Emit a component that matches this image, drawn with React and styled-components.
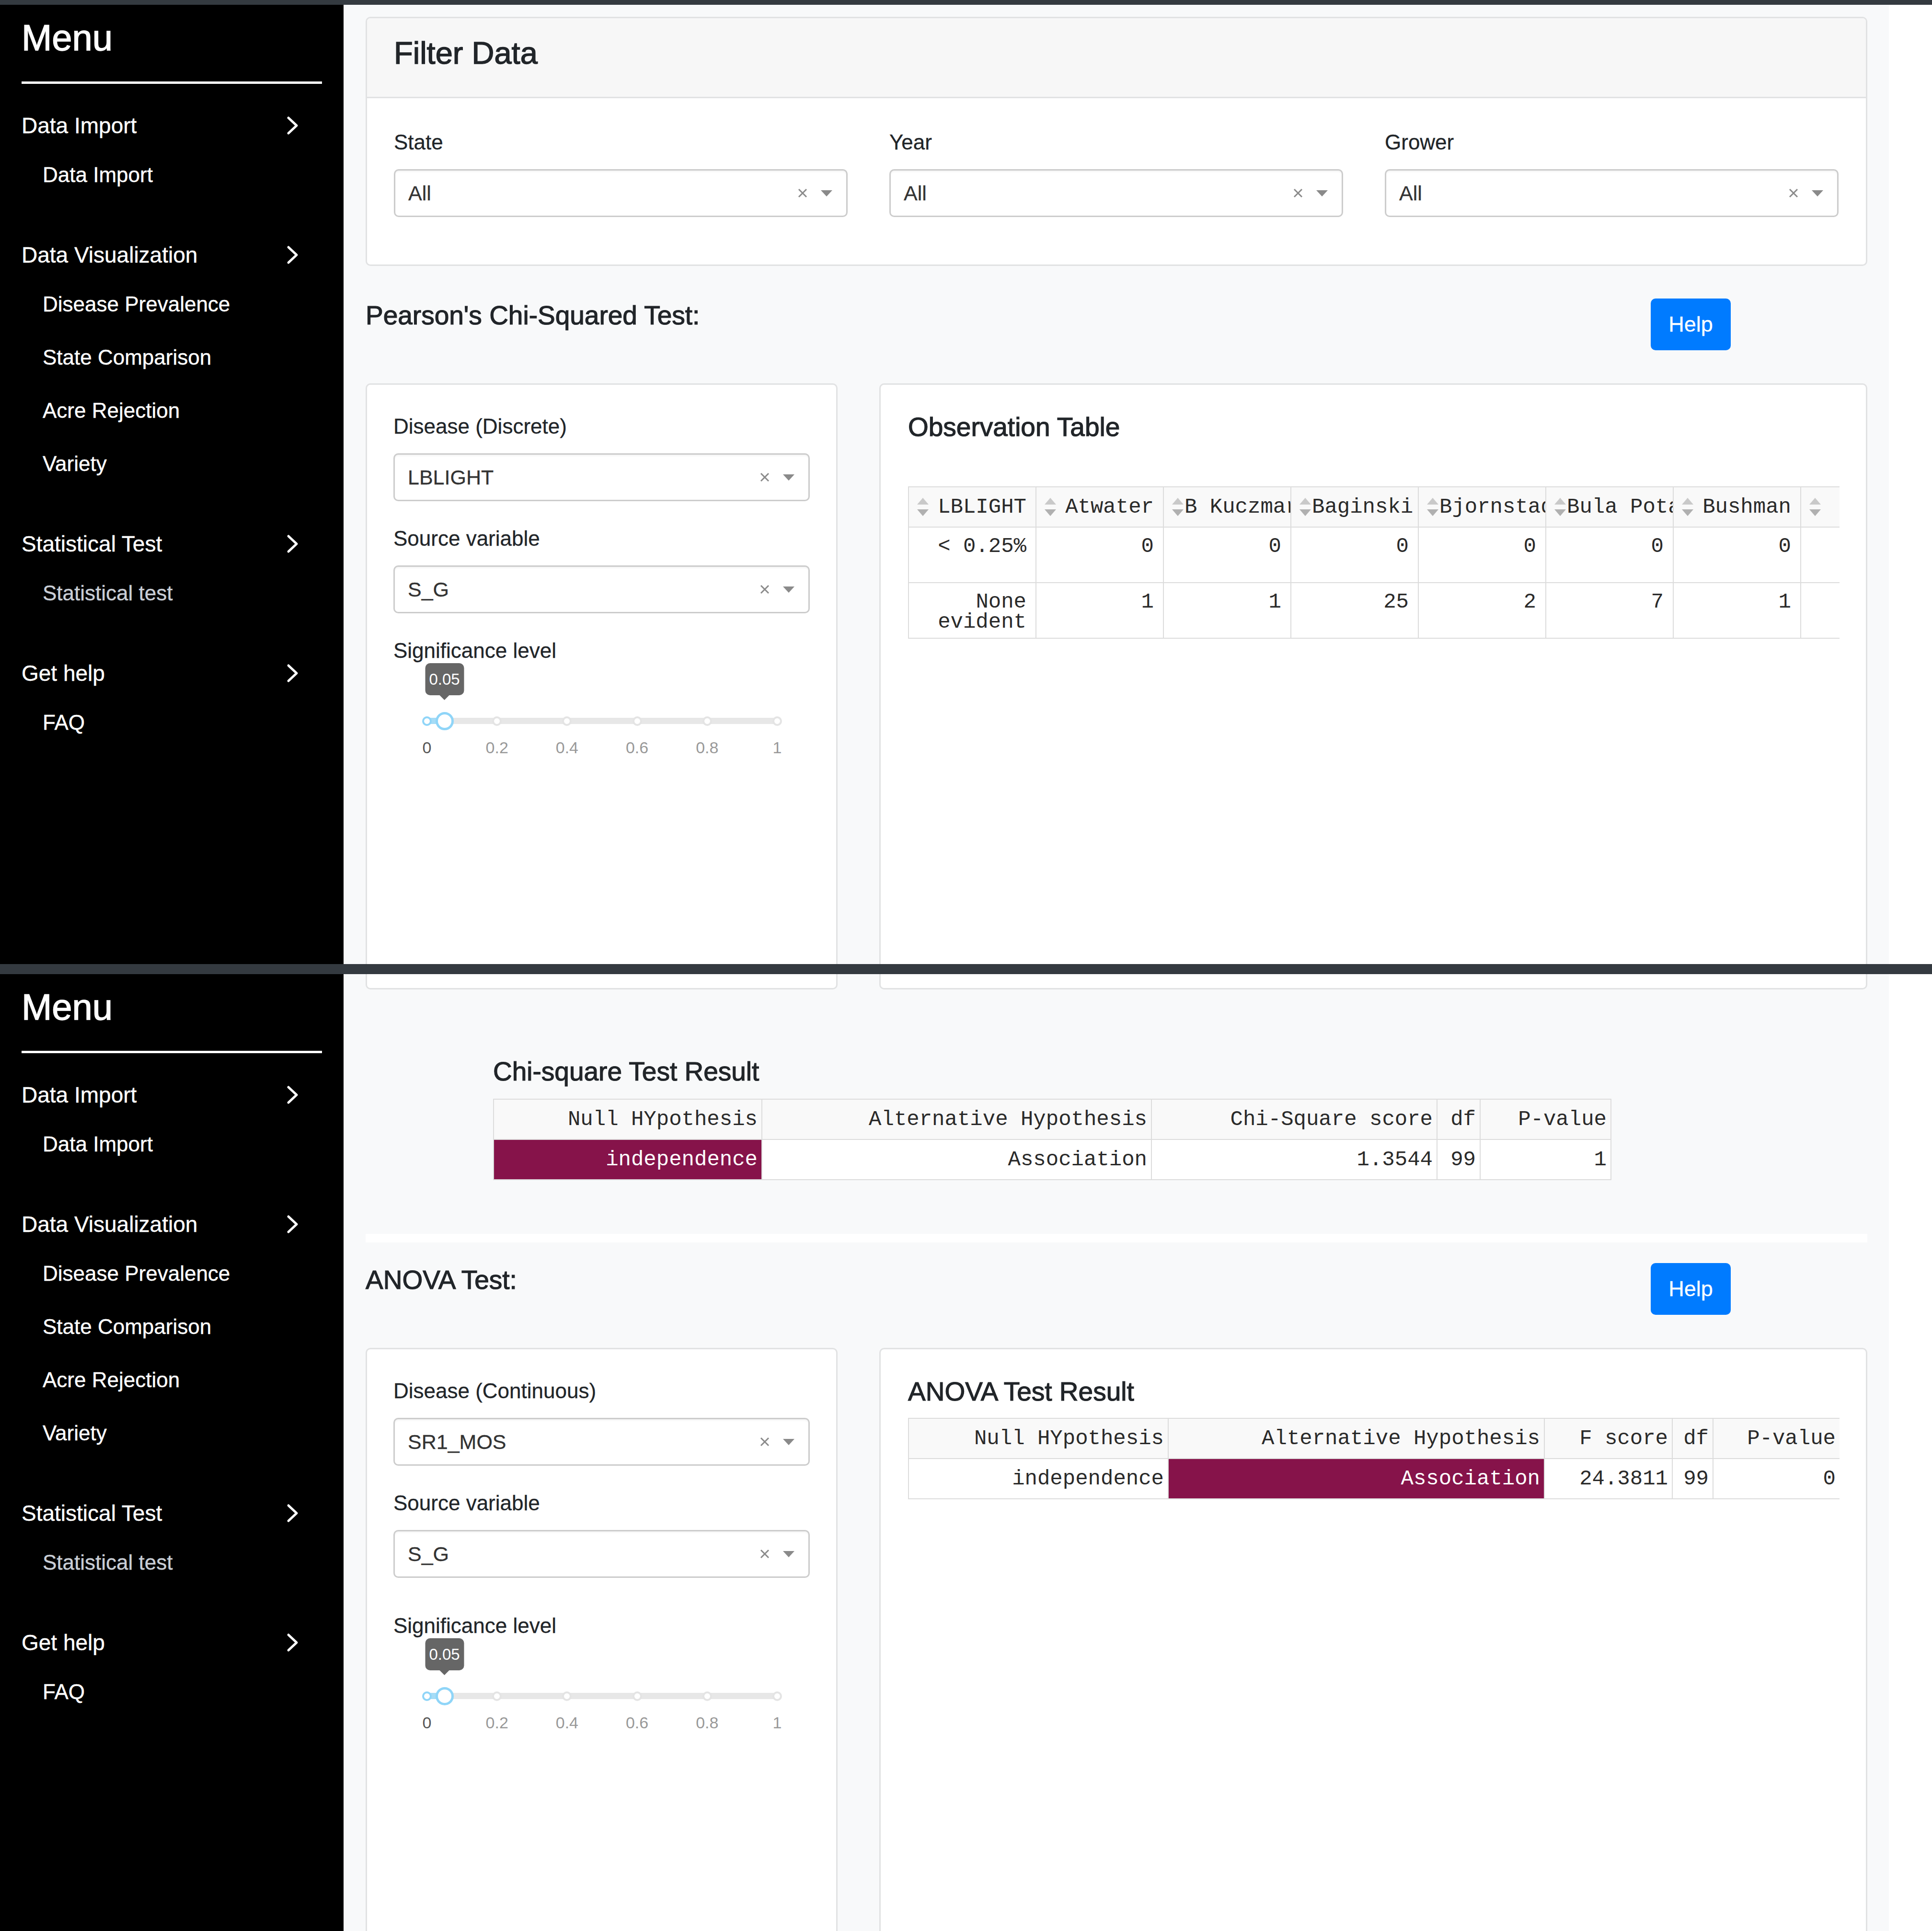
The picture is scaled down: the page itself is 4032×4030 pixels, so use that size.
import React from "react";
import styled, { createGlobalStyle } from "styled-components";

const SANS = `"Liberation Sans", Arial, Helvetica, sans-serif`;
const MONO = `"Liberation Mono", "Courier New", monospace`;

const GlobalStyle = createGlobalStyle`
  *, *::before, *::after { box-sizing: border-box; }
  html, body { margin: 0; padding: 0; background: #343a40; }
  body { font-family: ${SANS}; color: #212529; }
`;

const Page = styled.div`
  width: 4032px;
  height: 4030px;
  display: flex;
  flex-direction: column;
  background: #343a40;
  overflow: hidden;
`;

const Bar = styled.div`
  flex: none;
  height: ${(p) => p.$h}px;
  background: #343a40;
`;

const Screen = styled.div`
  flex: none;
  height: ${(p) => p.$h}px;
  display: flex;
  background: #ffffff;
  overflow: hidden;
`;

/* ---------- Sidebar ---------- */
const Sidebar = styled.nav`
  flex: none;
  width: 717px;
  background: #000;
  color: #fff;
  padding: 31px 45px 0 45px;
  font-family: ${SANS};
`;

const MenuTitle = styled.div`
  font-size: 76px;
  line-height: 76px;
  -webkit-text-stroke: 1.4px #fff;
`;

const MenuRule = styled.div`
  height: 5px;
  margin: 53px 0 52px;
  background: #fff;
`;

const GroupHeader = styled.div`
  height: 70px;
  display: flex;
  align-items: center;
  justify-content: space-between;
  padding-right: 47px;
  font-size: 46px;
  -webkit-text-stroke: 0.4px #fff;
`;

const SubList = styled.div`
  padding: 12px 0 77px 44px;
`;

const SubItem = styled.div`
  height: 111px;
  display: flex;
  align-items: center;
  font-size: 44px;
  color: ${(p) => (p.$active ? "#c9ced6" : "#ffffff")};
  -webkit-text-stroke: 0.4px ${(p) => (p.$active ? "#c9ced6" : "#ffffff")};
`;

const Chevron = () => (
  <svg width="28" height="40" viewBox="0 0 28 40" fill="none">
    <polyline
      points="5,4 22,20 5,36"
      stroke="#fff"
      strokeWidth="5"
      strokeLinecap="round"
      strokeLinejoin="round"
    />
  </svg>
);

const menu = [
  { title: "Data Import", items: ["Data Import"] },
  {
    title: "Data Visualization",
    items: ["Disease Prevalence", "State Comparison", "Acre Rejection", "Variety"],
  },
  { title: "Statistical Test", items: ["Statistical test"], active: "Statistical test" },
  { title: "Get help", items: ["FAQ"] },
];

const SideMenu = () => (
  <Sidebar>
    <MenuTitle>Menu</MenuTitle>
    <MenuRule />
    {menu.map((g) => (
      <div key={g.title}>
        <GroupHeader>
          <span>{g.title}</span>
          <Chevron />
        </GroupHeader>
        <SubList>
          {g.items.map((it) => (
            <SubItem key={it} $active={g.active === it}>
              {it}
            </SubItem>
          ))}
        </SubList>
      </div>
    ))}
  </Sidebar>
);

/* ---------- Main ---------- */
const Main = styled.main`
  flex: none;
  width: 3225px;
  background: #f8f9fa;
  padding: ${(p) => p.$top}px 45px 0 46px;
  display: flex;
  flex-direction: column;
`;

const Card = styled.section`
  flex: none;
  min-width: 0;
  background: #fff;
  border: 3px solid #e1e2e3;
  border-radius: 10px;
  height: ${(p) => (p.$h ? `${p.$h}px` : "auto")};
`;

const CardHeader = styled.div`
  background: #f7f7f7;
  border-bottom: 3px solid #e1e2e3;
  border-radius: 7px 7px 0 0;
  padding: 34px 56px 52px;
`;

const CardTitle = styled.h3`
  margin: 0;
  font-size: 65px;
  line-height: 78px;
  font-weight: 400;
  -webkit-text-stroke: 1.4px #212529;
`;

const FilterBody = styled.div`
  padding: 60px 57px 99px 56px;
  display: grid;
  grid-template-columns: repeat(3, minmax(0, 1fr));
  column-gap: 87px;
`;

const Field = styled.div`
  margin-top: ${(p) => p.$mt || 0}px;
`;

const Label = styled.label`
  display: block;
  font-size: 44px;
  line-height: 64px;
  margin-bottom: 24px;
  color: #212529;
  -webkit-text-stroke: 0.3px #212529;
`;

const SelectBox = styled.div`
  height: 100px;
  border: 3px solid #cccccc;
  border-radius: 10px;
  background: #fff;
  display: flex;
  align-items: center;
  padding: 0 29px 0 27px;
  font-size: 43px;
  color: #333;
  -webkit-text-stroke: 0.3px #333;
  box-shadow: inset 0 3px 3px rgba(0, 0, 0, 0.04);
`;

const SelectValue = styled.span`
  flex: 1;
`;

const SelectIcons = styled.span`
  display: flex;
  align-items: center;
  gap: 27px;
`;

const Select = ({ value }) => (
  <SelectBox>
    <SelectValue>{value}</SelectValue>
    <SelectIcons>
      <svg width="22" height="22" viewBox="0 0 22 22">
        <path d="M3 3 L19 19 M19 3 L3 19" stroke="#8a8a8a" strokeWidth="3" />
      </svg>
      <svg width="24" height="13" viewBox="0 0 24 13">
        <polygon points="0,0 24,0 12,13" fill="#8a8a8a" />
      </svg>
    </SelectIcons>
  </SelectBox>
);

const SectionHeader = styled.div`
  flex: none;
  display: flex;
  justify-content: space-between;
  align-items: flex-start;
  padding-right: 285px;
  margin-top: ${(p) => p.$mt}px;
`;

const SectionTitle = styled.h3`
  margin: 2px 0 0;
  font-size: 55px;
  line-height: 66px;
  font-weight: 400;
  -webkit-text-stroke: 1.2px #212529;
`;

const HelpButton = styled.button`
  width: 167px;
  height: 108px;
  padding: 0;
  border: none;
  border-radius: 10px;
  background: #007bff;
  color: #fff;
  font-family: ${SANS};
  font-size: 45px;
  -webkit-text-stroke: 0.3px #fff;
`;

const CardRow = styled.div`
  flex: none;
  display: grid;
  grid-template-columns: 985px minmax(0, 1fr);
  column-gap: 87px;
  margin-top: ${(p) => p.$mt || 0}px;
`;

const InputCardBody = styled.div`
  padding: 55px 55px;
`;

const ResultCardBody = styled.div`
  padding: 55px 55px 0 57px;
`;

const ResultTitle = styled.h4`
  margin: 0;
  font-size: 55px;
  line-height: 66px;
  font-weight: 400;
  -webkit-text-stroke: 1.2px #212529;
`;

/* ---------- Slider ---------- */
const SliderWrap = styled.div`
  padding: 84px 68px 0 70px;
`;

const Track = styled.div`
  position: relative;
  height: 13px;
  border-radius: 7px;
  background: #e7e7e7;
`;

const TrackFill = styled.div`
  position: absolute;
  left: 0;
  top: 0;
  height: 100%;
  background: #a6dcf6;
`;

const GridDots = styled.div`
  position: absolute;
  left: -10px;
  right: -10px;
  top: 50%;
  height: 20px;
  margin-top: -10px;
  display: flex;
  justify-content: space-between;
`;

const GridDot = styled.span`
  width: 20px;
  height: 20px;
  border-radius: 50%;
  background: #fff;
  border: 4px solid ${(p) => (p.$on ? "#8fd5f8" : "#e4e4e4")};
`;

const Handle = styled.span`
  position: absolute;
  top: 50%;
  width: 38px;
  height: 38px;
  margin: -19px 0 0 -19px;
  border-radius: 50%;
  background: #fff;
  border: 5px solid #8fd5f8;
`;

const Tip = styled.span`
  position: absolute;
  top: -114px;
  width: 81px;
  height: 67px;
  transform: translateX(-50%);
  border-radius: 10px;
  background: #666;
  color: #fff;
  font-size: 33px;
  display: flex;
  align-items: center;
  justify-content: center;
  &::after {
    content: "";
    position: absolute;
    left: 50%;
    bottom: -10px;
    margin-left: -10px;
    border-left: 10px solid transparent;
    border-right: 10px solid transparent;
    border-top: 10px solid #666;
  }
`;

const TickRow = styled.div`
  display: flex;
  justify-content: space-between;
  margin-top: 30px;
`;

const Tick = styled.span`
  width: 0;
  display: flex;
  justify-content: center;
  white-space: nowrap;
  font-size: 34px;
  line-height: 38px;
  color: ${(p) => (p.$first ? "#555" : "#999")};
`;

const ticks = ["0", "0.2", "0.4", "0.6", "0.8", "1"];

const Slider = ({ value }) => {
  const pos = `${value * 100}%`;
  return (
    <SliderWrap>
      <Track>
        <TrackFill style={{ width: pos }} />
        <GridDots>
          {ticks.map((t, i) => (
            <GridDot key={t} $on={i === 0} />
          ))}
        </GridDots>
        <Handle style={{ left: pos }} />
        <Tip style={{ left: pos }}>{value.toFixed(2)}</Tip>
      </Track>
      <TickRow>
        {ticks.map((t, i) => (
          <Tick key={t} $first={i === 0}>
            {t}
          </Tick>
        ))}
      </TickRow>
    </SliderWrap>
  );
};

const InputCard = ({ disease, value, sigGap }) => (
  <Card $h={1300}>
    <InputCardBody>
      <Field>
        <Label>{disease}</Label>
        <Select value={value} />
      </Field>
      <Field $mt={46}>
        <Label>Source variable</Label>
        <Select value="S_G" />
      </Field>
      <Field $mt={46 + sigGap}>
        <Label>Significance level</Label>
        <Slider value={0.05} />
      </Field>
    </InputCardBody>
  </Card>
);

/* ---------- Tables ---------- */
const TableClip = styled.div`
  width: 100%;
  overflow: hidden;
  margin-top: ${(p) => p.$mt}px;
`;

const DataTable = styled.table`
  border-collapse: collapse;
  table-layout: fixed;
  width: ${(p) => p.$w}px;
  font-family: ${MONO};
  font-size: 44px;
  color: #2a2a2a;
`;

const Col = styled.col`
  width: ${(p) => p.$w}px;
`;

const ObsHead = styled.th`
  position: relative;
  height: 84px;
  padding: 0 19px 0 43px;
  text-align: right;
  white-space: nowrap;
  overflow: hidden;
  font-weight: 400;
  background: #f9f9f9;
  border: 2px solid #dcdcdc;
`;

const SortIcon = styled.svg`
  position: absolute;
  left: 16px;
  top: 50%;
  margin-top: -19px;
`;

const ObsCell = styled.td`
  height: 116px;
  padding: 18px 19px 0;
  vertical-align: top;
  line-height: 42px;
  text-align: right;
  border: 2px solid #dcdcdc;
  background: #fff;
`;

const ResHead = styled.th`
  height: 84px;
  padding: 0 8px;
  text-align: right;
  white-space: nowrap;
  font-weight: 400;
  background: #f9f9f9;
  border: 2px solid #dcdcdc;
`;

const ResCell = styled.td`
  height: 84px;
  padding: 0 8px;
  text-align: right;
  white-space: nowrap;
  border: 2px solid #dcdcdc;
  background: ${(p) => (p.$hot ? "#86134a" : "#fff")};
  color: ${(p) => (p.$hot ? "#fff" : "#2a2a2a")};
`;

const Sort = () => (
  <SortIcon width="26" height="38" viewBox="0 0 26 38">
    <polygon points="13,0 25,14 1,14" fill="#c9c9c9" />
    <polygon points="1,24 25,24 13,38" fill="#b0b0b0" />
  </SortIcon>
);

const obsCols = ["LBLIGHT", "Atwater", "B Kuczmarski", "Baginski", "Bjornstad", "Bula Potato", "Bushman", "Cole"];
const obsRows = [
  ["< 0.25%", "0", "0", "0", "0", "0", "0", "0"],
  ["None evident", "1", "1", "25", "2", "7", "1", "3"],
];

const ObservationTable = () => (
  <TableClip $mt={91}>
    <DataTable $w={2130}>
      <thead>
        <tr>
          {obsCols.map((c) => (
            <ObsHead key={c}>
              <Sort />
              {c}
            </ObsHead>
          ))}
        </tr>
      </thead>
      <tbody>
        {obsRows.map((r) => (
          <tr key={r[0]}>
            {r.map((v, i) => (
              <ObsCell key={i}>{v}</ObsCell>
            ))}
          </tr>
        ))}
      </tbody>
    </DataTable>
  </TableClip>
);

const ResultTable = ({ widths, heads, row, hot }) => (
  <DataTable $w={widths.reduce((a, b) => a + b, 0)}>
    <colgroup>
      {widths.map((w, i) => (
        <Col key={i} $w={w} />
      ))}
    </colgroup>
    <thead>
      <tr>
        {heads.map((h) => (
          <ResHead key={h}>{h}</ResHead>
        ))}
      </tr>
    </thead>
    <tbody>
      <tr>
        {row.map((v, i) => (
          <ResCell key={i} $hot={i === hot}>
            {v}
          </ResCell>
        ))}
      </tr>
    </tbody>
  </DataTable>
);

const ResultBlock = styled.div`
  flex: none;
  margin: ${(p) => p.$mt}px 0 0 266px;
`;

const TableGap = styled.div`
  margin-top: 24px;
`;

const StubRow = styled.div`
  flex: none;
  display: grid;
  grid-template-columns: 985px minmax(0, 1fr);
  column-gap: 87px;
  height: 32px;
`;

const CardStub = styled.div`
  background: #fff;
  border: 3px solid #e1e2e3;
  border-top: none;
  border-radius: 0 0 10px 10px;
`;

const Divider = styled.div`
  flex: none;
  height: 18px;
  margin-top: 112px;
  background: #fff;
`;

/* ---------- Screens ---------- */
const TopScreen = () => (
  <Screen $h={2002}>
    <SideMenu />
    <Main $top={25}>
      <Card>
        <CardHeader>
          <CardTitle>Filter Data</CardTitle>
        </CardHeader>
        <FilterBody>
          {["State", "Year", "Grower"].map((l) => (
            <Field key={l}>
              <Label>{l}</Label>
              <Select value="All" />
            </Field>
          ))}
        </FilterBody>
      </Card>
      <SectionHeader $mt={68}>
        <SectionTitle>Pearson's Chi-Squared Test:</SectionTitle>
        <HelpButton>Help</HelpButton>
      </SectionHeader>
      <CardRow $mt={69}>
        <InputCard disease="Disease (Discrete)" value="LBLIGHT" sigGap={0} />
        <Card $h={1300}>
          <ResultCardBody>
            <ResultTitle>Observation Table</ResultTitle>
            <ObservationTable />
          </ResultCardBody>
        </Card>
      </CardRow>
    </Main>
  </Screen>
);

const heads = ["Null HYpothesis", "Alternative Hypothesis"];

const BottomScreen = () => (
  <Screen $h={1997}>
    <SideMenu />
    <Main $top={0}>
      <StubRow>
        <CardStub />
        <CardStub />
      </StubRow>
      <ResultBlock $mt={138}>
        <ResultTitle>Chi-square Test Result</ResultTitle>
        <TableGap>
          <ResultTable
            widths={[560, 813, 596, 90, 273]}
            heads={[...heads, "Chi-Square score", "df", "P-value"]}
            row={["independence", "Association", "1.3544", "99", "1"]}
            hot={0}
          />
        </TableGap>
      </ResultBlock>
      <Divider />
      <SectionHeader $mt={43}>
        <SectionTitle>ANOVA Test:</SectionTitle>
        <HelpButton>Help</HelpButton>
      </SectionHeader>
      <CardRow $mt={69}>
        <InputCard disease="Disease (Continuous)" value="SR1_MOS" sigGap={22} />
        <Card $h={1300}>
          <ResultCardBody>
            <ResultTitle>ANOVA Test Result</ResultTitle>
            <TableClip $mt={22}>
              <ResultTable
                widths={[542, 785, 267, 85, 265]}
                heads={[...heads, "F score", "df", "P-value"]}
                row={["independence", "Association", "24.3811", "99", "0"]}
                hot={1}
              />
            </TableClip>
          </ResultCardBody>
        </Card>
      </CardRow>
    </Main>
  </Screen>
);

export default function App() {
  return (
    <>
      <GlobalStyle />
      <Page>
        <Bar $h={10} />
        <TopScreen />
        <Bar $h={21} />
        <BottomScreen />
      </Page>
    </>
  );
}
